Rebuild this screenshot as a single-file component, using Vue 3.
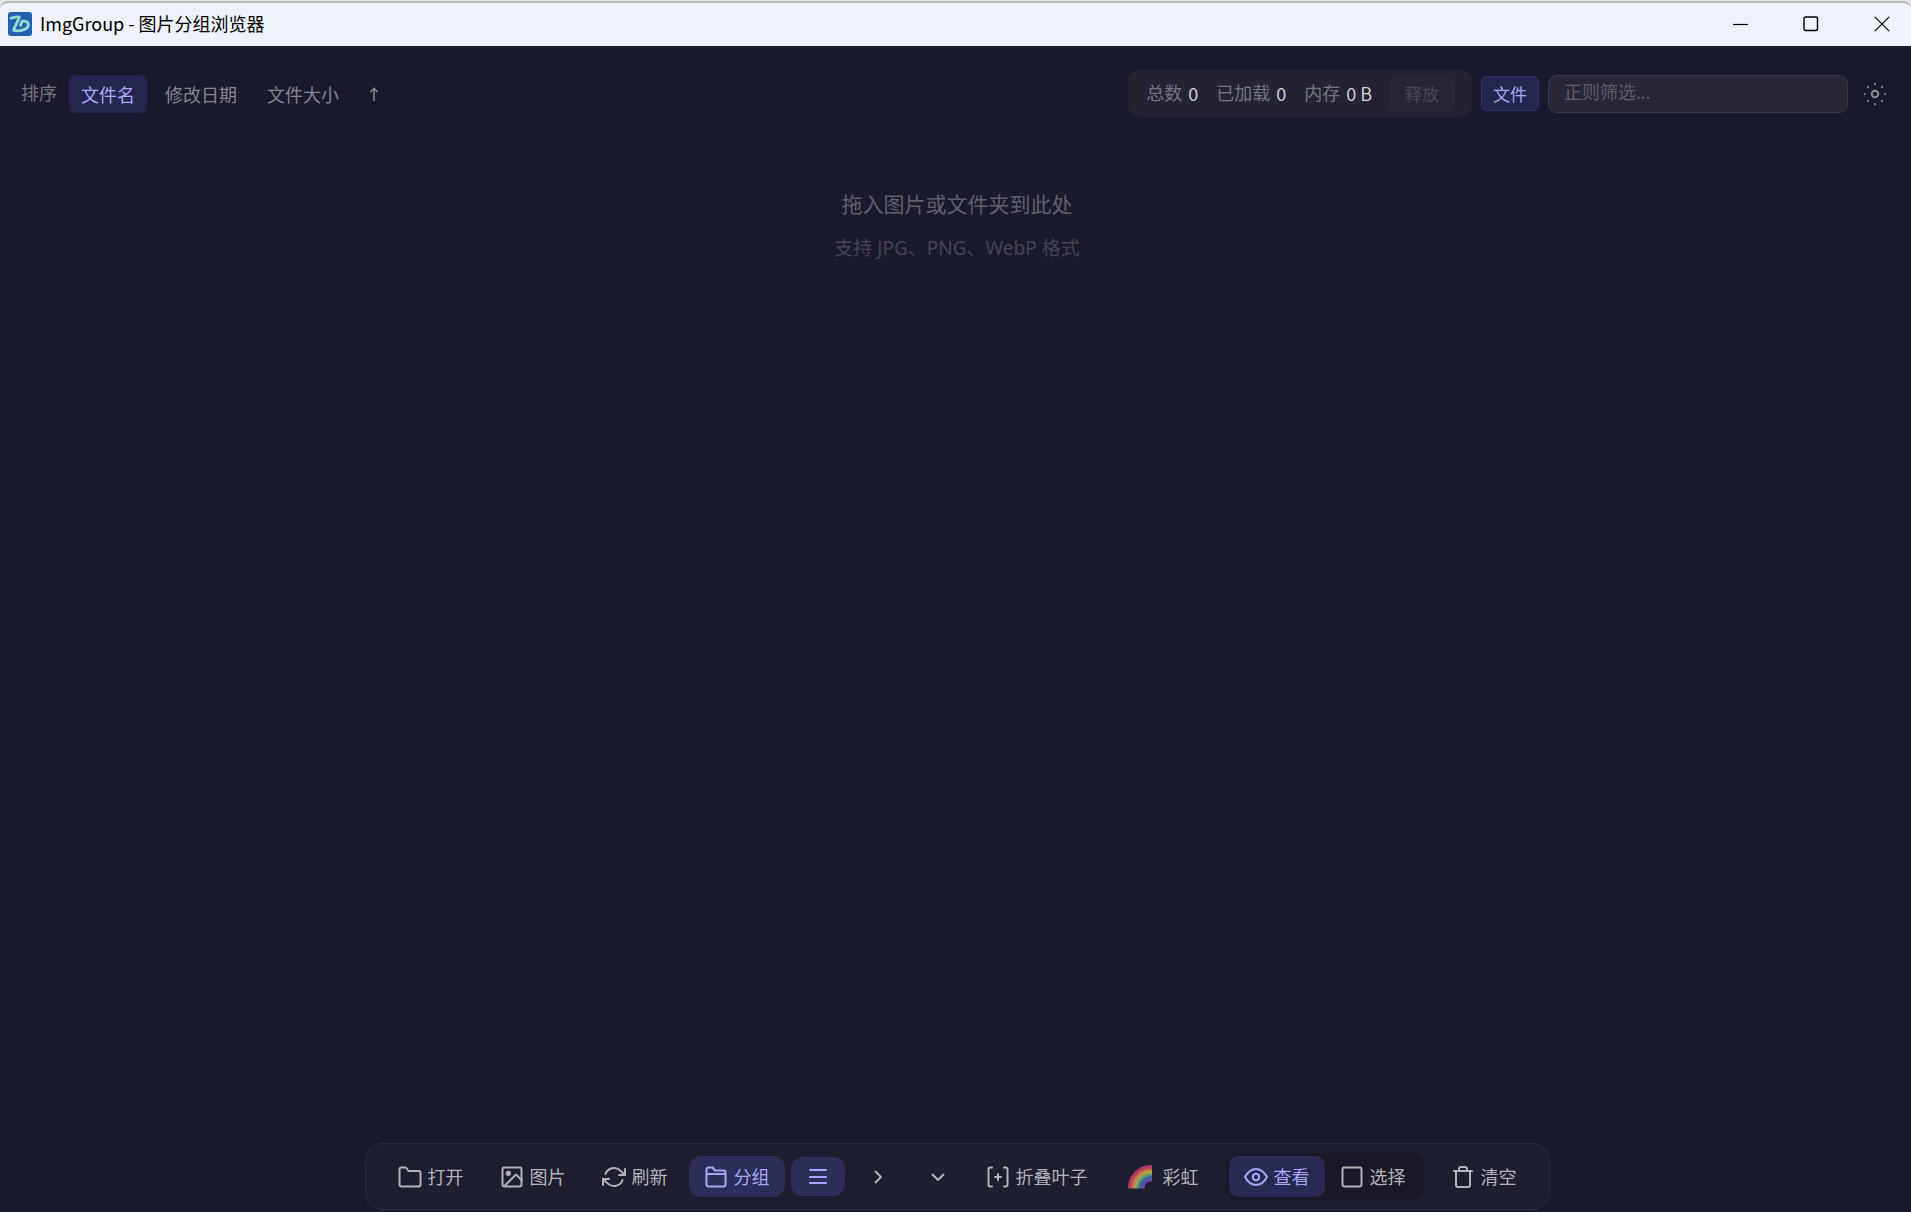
<script setup>
import { ref } from 'vue'

const sortOptions = [
  { key: 'name', label: '文件名' },
  { key: 'date', label: '修改日期' },
  { key: 'size', label: '文件大小' }
]

const sortKey = ref('name')
const ascending = ref(true)
const filter = ref('')
const grouped = ref(true)
const listView = ref(true)
const mode = ref('view')

const stats = ref([
  { label: '总数', value: '0' },
  { label: '已加载', value: '0' },
  { label: '内存', value: '0 B' }
])

const rainbow = ['#b8326b', '#c4574a', '#c2924a', '#a9a352', '#3f9c7c', '#3f62b5', '#7049a6']
</script>

<template>
  <div class="window">
    <header class="titlebar">
      <svg class="titlebar__logo" viewBox="0 0 24 24" aria-hidden="true">
        <rect width="24" height="24" rx="3" fill="#2360b0" />
        <path
          d="M3 6.2C6 5.4 9 4.7 11.4 4.8C10.4 9 6.5 14 5.6 18.4C11 19.6 19.5 18.2 20.3 13.6C20.8 9.8 17.5 8.6 14.2 9.2C13.5 10.5 12.9 12 12.6 13.4"
          fill="none"
          stroke="#92dcd0"
          stroke-width="2.8"
          stroke-linecap="round"
          stroke-linejoin="round"
        />
      </svg>
      <h1 class="titlebar__title">ImgGroup - 图片分组浏览器</h1>
      <div class="titlebar__controls">
        <button type="button" aria-label="最小化">
          <svg viewBox="0 0 16 16"><path d="M0 8.5H15" /></svg>
        </button>
        <button type="button" aria-label="最大化">
          <svg viewBox="0 0 16 16"><rect x="1" y="1" width="13.5" height="13.5" rx="1.5" stroke-width="1.4" /></svg>
        </button>
        <button type="button" aria-label="关闭">
          <svg viewBox="0 0 16 16"><path d="M0.8 0.8L15.2 15.2M15.2 0.8L0.8 15.2" /></svg>
        </button>
      </div>
    </header>

    <div class="toolbar">
      <div class="sort">
        <span class="sort__label">排序</span>
        <button
          v-for="option in sortOptions"
          :key="option.key"
          type="button"
          :class="['sort__button', sortKey === option.key && 'sort__button--active']"
          @click="sortKey = option.key"
        >
          {{ option.label }}
        </button>
        <button type="button" class="sort__button" aria-label="排序方向" @click="ascending = !ascending">
          <svg :class="['sort__arrow', !ascending && 'sort__arrow--down']" viewBox="0 0 10 16">
            <path d="M5 14V1.500M1.500 5L5 1.300L8.500 5" />
          </svg>
        </button>
      </div>

      <div class="tools">
        <div class="stats">
          <span v-for="item in stats" :key="item.label" class="stats__item">
            {{ item.label }}
            <span class="stats__value">{{ item.value }}</span>
          </span>
          <button type="button" class="tag" disabled>释放</button>
        </div>
        <button type="button" class="tag tag--active">文件</button>
        <input v-model="filter" class="filter" type="text" placeholder="正则筛选..." aria-label="正则筛选" />
        <button type="button" class="theme" aria-label="主题">
          <svg viewBox="0 0 24 24">
            <circle cx="12" cy="12" r="3.2" />
            <path d="M12 1.8v.1M12 22.1v.1M1.8 12h.1M22.1 12h.1M4.9 4.9h.1M19 4.9h.1M4.9 19.1h.1M19 19.1h.1" />
          </svg>
        </button>
      </div>
    </div>

    <main class="empty">
      <p class="empty__title">拖入图片或文件夹到此处</p>
      <p class="empty__hint">支持 JPG、PNG、WebP 格式</p>
    </main>

    <footer class="dock-wrap">
      <nav class="dock">
        <button type="button" class="dock__button">
          <svg class="icon" viewBox="0 0 24 24">
            <path d="M1.5 4.5Q1.5 2.5 3.5 2.5H8L10.5 6H20.5Q22.5 6 22.5 8V19.5Q22.5 21.5 20.5 21.5H3.5Q1.5 21.5 1.5 19.5Z" />
          </svg>
          打开
        </button>
        <button type="button" class="dock__button">
          <svg class="icon" viewBox="0 0 24 24">
            <rect x="2.5" y="2.5" width="19" height="19" rx="2" />
            <circle cx="8.3" cy="8.3" r="1.6" fill="currentColor" />
            <path d="M21.5 15L16 9.5L4.5 21" />
          </svg>
          图片
        </button>
        <button type="button" class="dock__button">
          <svg class="icon" viewBox="0 0 24 24">
            <path d="M23 4V10H17M1 20V14H7" />
            <path d="M3.5 9A9 9 0 0 1 18.4 5.6L23 10M1 14L5.6 18.4A9 9 0 0 0 20.5 15" />
          </svg>
          刷新
        </button>
        <button
          type="button"
          :class="['dock__button', grouped && 'dock__button--active']"
          @click="grouped = !grouped"
        >
          <svg class="icon" viewBox="0 0 24 24">
            <path d="M2.5 4.5Q2.5 2.5 4.5 2.5H8.5L11 5.5H19.5Q21.5 5.5 21.5 7.5V19.5Q21.5 21.5 19.5 21.5H4.5Q2.5 21.5 2.5 19.5ZM2.5 9H21.5" />
          </svg>
          分组
        </button>
        <button
          type="button"
          :class="['dock__button', 'dock__button--icon', listView && 'dock__button--active']"
          aria-label="列表"
          @click="listView = !listView"
        >
          <svg class="icon" viewBox="0 0 24 24"><path d="M4 5H20M4 12H20M4 18H20" /></svg>
        </button>
        <button type="button" class="dock__button dock__button--icon" aria-label="全部折叠">
          <svg class="icon" viewBox="0 0 24 24"><path d="M9.5 6.5L15 12L9.5 17.5" /></svg>
        </button>
        <button type="button" class="dock__button dock__button--icon" aria-label="全部展开">
          <svg class="icon" viewBox="0 0 24 24"><path d="M6.5 9.5L12 15L17.5 9.5" /></svg>
        </button>
        <button type="button" class="dock__button">
          <svg class="icon" viewBox="0 0 24 24">
            <path d="M6 2.5H4.5Q2.5 2.5 2.5 4.5V19.5Q2.5 21.5 4.5 21.5H6M18 2.5H19.5Q21.5 2.5 21.5 4.5V19.5Q21.5 21.5 19.5 21.5H18M12 9V15M9 12H15" />
          </svg>
          折叠叶子
        </button>
        <button type="button" class="dock__button">
          <svg class="icon icon--wide" viewBox="0 0 33 24">
            <path
              v-for="(color, i) in rainbow"
              :key="color"
              :d="`M${5.2 + i * 2.3} 23.5A${22 - i * 2.3} ${22 - i * 2.3} 0 0 1 28 ${1.2 + i * 2.3}`"
              :stroke="color"
              stroke-width="2.5"
              stroke-linecap="butt"
            />
          </svg>
          彩虹
        </button>
        <div class="segment">
          <button
            type="button"
            :class="['dock__button', mode === 'view' && 'dock__button--selected']"
            @click="mode = 'view'"
          >
            <svg class="icon" viewBox="0 0 24 24">
              <path d="M1 12Q5.5 4 12 4T23 12Q18.5 20 12 20T1 12Z" />
              <circle cx="12" cy="12" r="3.2" />
            </svg>
            查看
          </button>
          <button
            type="button"
            :class="['dock__button', mode === 'select' && 'dock__button--selected']"
            @click="mode = 'select'"
          >
            <svg class="icon" viewBox="0 0 24 24"><rect x="2.5" y="2.5" width="19" height="19" rx="2" /></svg>
            选择
          </button>
        </div>
        <button type="button" class="dock__button">
          <svg class="icon" viewBox="0 0 24 24">
            <path d="M3 6H21M5 6V20Q5 22 7 22H17Q19 22 19 20V6M8 6V4Q8 2 10 2H14Q16 2 16 4V6" />
          </svg>
          清空
        </button>
      </nav>
    </footer>
  </div>
</template>

<style>
body {
  background: #1a1a2e;
}
</style>

<style scoped>
.window {
  box-sizing: border-box;
  display: flex;
  flex-direction: column;
  min-height: 100vh;
  padding-top: 1px;
  font-family: 'Noto Sans', 'Noto Sans CJK SC', sans-serif;
  font-size: 18px;
  line-height: 24px;
  color: #85858f;
  background: linear-gradient(#e6e6e6 0 20px, #1a1a2e 20px);
}

button {
  margin: 0;
  padding: 0;
  border: 0;
  font: inherit;
  color: inherit;
  background: none;
  white-space: nowrap;
}

svg {
  display: block;
  flex-shrink: 0;
  fill: none;
  stroke: currentColor;
}

.titlebar {
  box-sizing: border-box;
  display: flex;
  align-items: center;
  height: 45px;
  padding-left: 8px;
  border-top: 2px solid #b6b8b9;
  border-radius: 8px 8px 0 0;
  color: #000;
  background: #eef2fa;
}

.titlebar__logo {
  width: 24px;
  height: 24px;
  margin-bottom: 2px;
  stroke: none;
}

.titlebar__title {
  margin: 0 0 0 8px;
  padding-bottom: 4px;
  font-family: 'Noto Sans CJK SC', sans-serif;
  font-size: 18px;
  font-weight: 400;
}

.titlebar__controls {
  display: flex;
  margin-left: auto;
  padding-bottom: 2px;
}

.titlebar__controls button {
  display: flex;
  align-items: center;
  justify-content: center;
  width: 70px;
  height: 41px;
}

.titlebar__controls button:last-child {
  width: 65px;
  padding-left: 7px;
}

.titlebar__controls svg {
  width: 16px;
  height: 16px;
  stroke-width: 1.2;
}

.toolbar {
  display: flex;
  align-items: center;
  justify-content: space-between;
  padding: 24px 18px 0 21px;
}

.sort {
  display: flex;
  align-items: center;
  gap: 6px;
}

.sort__label {
  margin-right: 6px;
  padding-bottom: 2px;
  color: #757580;
}

.sort__button {
  height: 38px;
  padding: 2px 12px 0;
  border-radius: 6px;
}

.sort__button--active {
  color: #a5a8fb;
  background: #25264d;
}

.sort__arrow {
  width: 10px;
  height: 16px;
  stroke-width: 1.6;
}

.sort__arrow--down {
  transform: rotate(180deg);
}

.tools {
  display: flex;
  align-items: center;
  gap: 9px;
}

.stats {
  display: flex;
  align-items: center;
  gap: 18px;
  height: 47px;
  padding: 0 18px;
  border-radius: 12px;
  color: #757580;
  background: #232334;
}

.stats__item {
  display: flex;
  gap: 6px;
  padding-bottom: 2px;
}

.stats__value {
  font-family: 'Noto Sans CJK SC', sans-serif;
  color: #d1d1d5;
}

.tag {
  height: 35px;
  padding: 2px 11px 0;
  border: 1px solid #2d2d3f;
  border-radius: 6px;
  font-size: 17px;
}

.tag:disabled {
  padding: 2px 14px 0;
  color: #484855;
  background: #262637;
}

.tag--active {
  border-color: #30316a;
  color: #a5a8fb;
  background: #25264d;
}

.filter {
  box-sizing: border-box;
  width: 300px;
  height: 38px;
  padding: 0 15px 3px;
  border: 1px solid #393949;
  border-radius: 9px;
  outline: 0;
  font: inherit;
  color: #d1d1d5;
  background: #272738;
}

.filter::placeholder {
  color: #5d5d69;
}

.theme {
  display: flex;
  align-items: center;
  justify-content: center;
  width: 36px;
  height: 36px;
  color: #8d8d96;
}

.theme svg {
  width: 24px;
  height: 24px;
  stroke-width: 2;
  stroke-linecap: round;
}

.empty {
  flex: 1;
  padding: 71px 18px 0 21px;
  text-align: center;
}

.empty p {
  margin: 0;
}

.empty__title {
  font-size: 21px;
  line-height: 32px;
  color: #5f5f6c;
}

.empty .empty__hint {
  margin-top: 12px;
  font-size: 19px;
  line-height: 32px;
  color: #434353;
}

.dock-wrap {
  display: flex;
  justify-content: center;
  padding: 0 18px 2px 21px;
}

.dock {
  display: flex;
  align-items: center;
  gap: 6px;
  padding: 9px 17px;
  border: 1px solid #2c2c3e;
  border-radius: 18px;
  color: #b2b2b9;
  background: #1e1e31;
}

.dock__button {
  display: flex;
  align-items: center;
  gap: 6px;
  height: 41px;
  padding: 1px 15px 0;
  border-radius: 12px;
}

.dock__button--icon {
  height: 39px;
}

.dock__button--active {
  color: #a5a8fb;
  background: #2c2d59;
}

.dock__button--selected {
  border-radius: 9px;
  color: #a5a8fb;
  background: #282952;
}

.segment {
  display: flex;
  margin: 0 6px;
  padding: 3px;
  border-radius: 12px;
  background: #191927;
}

.icon {
  width: 24px;
  height: 24px;
  stroke-width: 2;
  stroke-linecap: round;
  stroke-linejoin: round;
}

.icon--wide {
  width: 33px;
}
</style>
